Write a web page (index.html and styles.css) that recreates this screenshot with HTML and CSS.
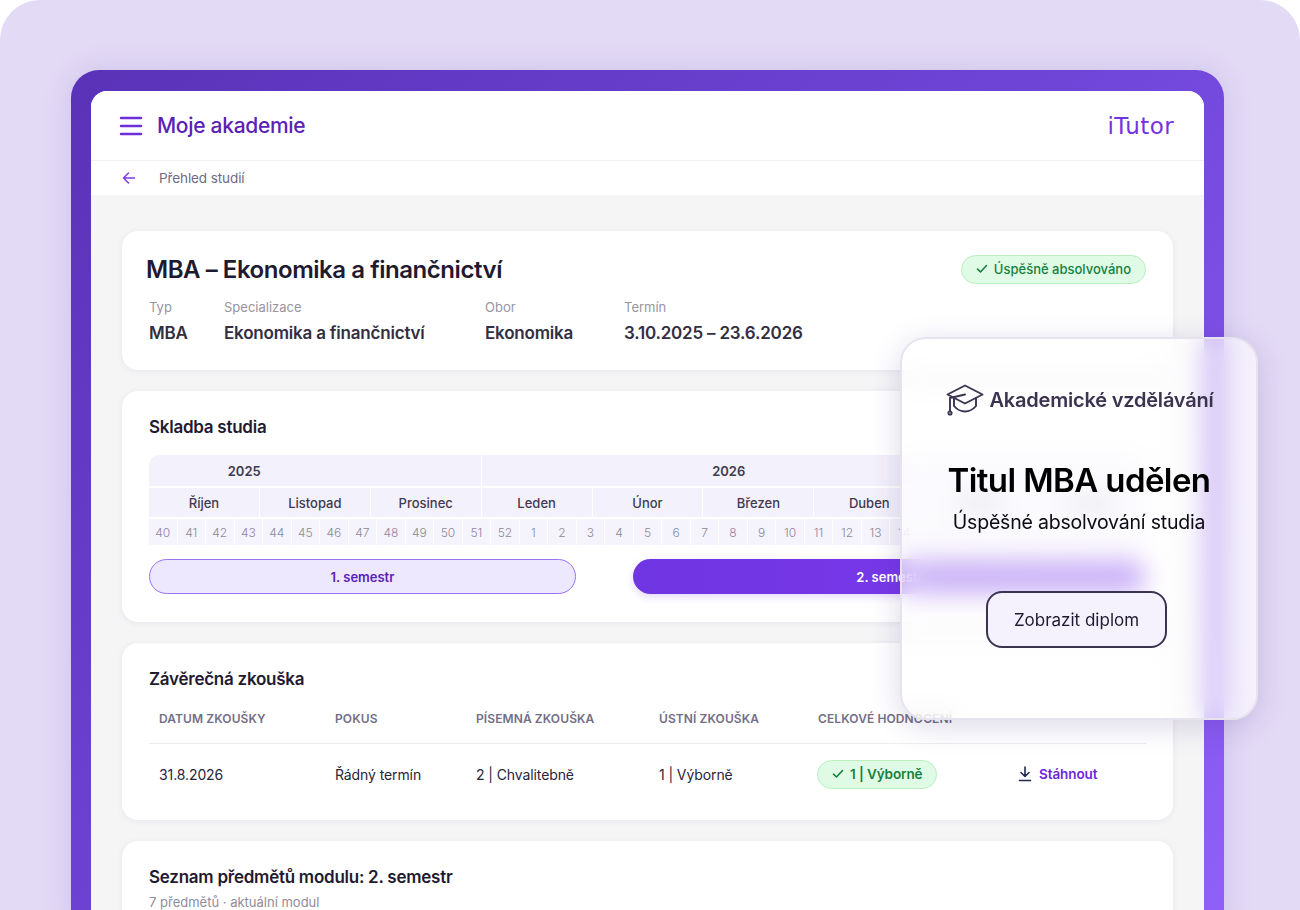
FILE: index.html
```html
<!DOCTYPE html>
<html lang="cs">
<head>
    <meta charset="UTF-8">
    <meta name="viewport" content="width=device-width, initial-scale=1.0">
    <title>Moje akademie</title>
    <link rel="stylesheet" href="styles.css">
</head>
<body>
    <div class="stage">
        <div class="frame">
            <div class="app">
                <header class="topbar">
                    <div class="topbar-left">
                        <svg class="menu-icon" width="24" height="20" viewBox="0 0 24 20" fill="none" stroke="#6d2fdb" stroke-width="2.4" stroke-linecap="round">
                            <path d="M2 2h20M2 10h20M2 18h20"/>
                        </svg>
                        <span class="app-title">Moje akademie</span>
                    </div>
                    <span class="logo">iTutor</span>
                </header>
                <nav class="crumbs">
                    <svg class="back-icon" width="14" height="14" viewBox="0 0 14 14" fill="none" stroke="#7c3aed" stroke-width="1.5" stroke-linecap="round" stroke-linejoin="round">
                        <path d="M12.5 7H1.5M6.5 2 1.5 7l5 5"/>
                    </svg>
                    <span>Přehled studií</span>
                </nav>
                <main class="content">
                    <section class="card card-head">
                        <div class="head-row">
                            <h1>MBA – Ekonomika a finančnictví</h1>
                            <span class="badge">
                                <svg width="12" height="10" viewBox="0 0 12 10" fill="none" stroke="#15803d" stroke-width="1.6" stroke-linecap="round" stroke-linejoin="round"><path d="M1.5 5.2 4.5 8l6-6.5"/></svg>
                                Úspěšně absolvováno
                            </span>
                        </div>
                        <div class="meta">
                            <div><div class="meta-label">Typ</div><div class="meta-value">MBA</div></div>
                            <div><div class="meta-label">Specializace</div><div class="meta-value">Ekonomika a finančnictví</div></div>
                            <div><div class="meta-label">Obor</div><div class="meta-value">Ekonomika</div></div>
                            <div><div class="meta-label">Termín</div><div class="meta-value">3.10.2025 – 23.6.2026</div></div>
                        </div>
                    </section>

                    <section class="card card-plan">
                        <h2>Skladba studia</h2>
                        <div class="timeline">
                            <div class="years">
                                <div class="year year-a">2025</div>
                                <div class="year year-b">2026</div>
                            </div>
                            <div class="months">
                                <div>Říjen</div><div>Listopad</div><div>Prosinec</div><div>Leden</div><div>Únor</div><div>Březen</div><div>Duben</div><div>Květen</div><div>Červen</div>
                            </div>
                            <div class="weeks">
                                <div>40</div><div>41</div><div>42</div><div>43</div><div>44</div><div>45</div><div>46</div><div>47</div><div>48</div><div>49</div><div>50</div><div>51</div><div>52</div><div>1</div><div>2</div><div>3</div><div>4</div><div>5</div><div>6</div><div>7</div><div>8</div><div>9</div><div>10</div><div>11</div><div>12</div><div>13</div><div>14</div><div>15</div><div>16</div><div>17</div><div>18</div><div>19</div><div>20</div><div>21</div><div>22</div>
                            </div>
                        </div>
                        <div class="semesters">
                            <div class="semester semester-done">1. semestr</div>
                            <div class="semester semester-active">2. semestr</div>
                        </div>
                    </section>

                    <section class="card card-exam">
                        <h2>Závěrečná zkouška</h2>
                        <div class="exam-table">
                            <div class="exam-th">Datum zkoušky</div>
                            <div class="exam-th">Pokus</div>
                            <div class="exam-th">Písemná zkouška</div>
                            <div class="exam-th">Ústní zkouška</div>
                            <div class="exam-th">Celkové hodnocení</div>
                            <div class="exam-th"></div>
                            <div class="exam-td">31.8.2026</div>
                            <div class="exam-td">Řádný termín</div>
                            <div class="exam-td">2 | Chvalitebně</div>
                            <div class="exam-td">1 | Výborně</div>
                            <div class="exam-td">
                                <span class="badge badge-strong">
                                    <svg width="12" height="10" viewBox="0 0 12 10" fill="none" stroke="#15803d" stroke-width="1.6" stroke-linecap="round" stroke-linejoin="round"><path d="M1.5 5.2 4.5 8l6-6.5"/></svg>
                                    1 | Výborně
                                </span>
                            </div>
                            <div class="exam-td">
                                <a class="download">
                                    <svg width="14" height="16" viewBox="0 0 14 16" fill="none" stroke="#1e2a4a" stroke-width="1.6" stroke-linecap="round" stroke-linejoin="round"><path d="M7 1v9M3 6.5 7 10.5l4-4M1.5 14.5h11"/></svg>
                                    Stáhnout
                                </a>
                            </div>
                        </div>
                    </section>

                    <section class="card card-list">
                        <h2>Seznam předmětů modulu: 2. semestr</h2>
                        <p class="list-sub">7 předmětů · aktuální modul</p>
                    </section>
                </main>
            </div>
        </div>

        <aside class="glass">
            <div class="glass-brand">
                <svg width="38" height="32" viewBox="0 0 38 32" fill="none" stroke="#3b3350" stroke-width="1.9" stroke-linecap="round" stroke-linejoin="round">
                    <path d="M19 1.5 36.5 10.5 19 19.5 1.5 10.5Z"/>
                    <path d="M8 14v8c3 3.5 7 5.5 11 5.5s8-2 11-5.5v-8"/>
                    <path d="M19 10.5 4 14v13"/>
                    <circle cx="4" cy="29" r="1.6"/>
                </svg>
                <span>Akademické vzdělávání</span>
            </div>
            <div class="glass-title">Titul MBA udělen</div>
            <div class="glass-sub">Úspěšné absolvování studia</div>
            <button class="glass-btn">Zobrazit diplom</button>
        </aside>
    </div>
</body>
</html>
```

FILE: styles.css
```css
* {
    box-sizing: border-box;
}
html, body {
    margin: 0;
    background: #fff;
}
body {
    font-family: "Inter", "Noto Sans", sans-serif;
    color: #1f1a30;
}
h1, h2, p {
    margin: 0;
}

.stage {
    position: relative;
    width: 1300px;
    height: 910px;
    overflow: hidden;
    padding: 70px 76px 0 71px;
    background: #e3daf6;
    border-radius: 40px 40px 0 0;
}
.frame {
    height: 860px;
    padding: 21px 20px 0;
    border-radius: 28px 28px 0 0;
    background: linear-gradient(135deg, #5a32b8 0%, #6f45d8 50%, #9060f8 100%);
    box-shadow: 0 0 30px rgba(70, 40, 150, 0.14);
}
.app {
    height: 100%;
    overflow: hidden;
    border-radius: 16px 16px 0 0;
    background: #f5f5f6;
}

.topbar {
    display: flex;
    align-items: center;
    justify-content: space-between;
    height: 70px;
    padding: 0 30px 0 28px;
    background: #fff;
    border-bottom: 1px solid #f1f0f5;
}
.topbar-left {
    display: flex;
    align-items: center;
    gap: 14px;
}
.app-title {
    font-size: 21px;
    font-weight: 500;
    letter-spacing: -0.3px;
    color: #5b21b6;
}
.logo {
    font-family: "DejaVu Sans", sans-serif;
    font-size: 23px;
    letter-spacing: 0.4px;
    color: #7432e0;
}
.crumbs {
    display: flex;
    align-items: center;
    height: 34px;
    padding: 0 0 0 31px;
    gap: 23px;
    background: #fff;
    font-size: 13.5px;
    letter-spacing: -0.1px;
    color: #6f6b80;
}

.content {
    display: flex;
    flex-direction: column;
    gap: 21px;
    padding: 36px 31px 0;
}
.card {
    background: #fff;
    border-radius: 16px;
    box-shadow: 0 1px 6px rgba(60, 50, 110, 0.08);
}

.card-head {
    height: 139px;
    padding: 22px 27px 0 24px;
}
.head-row {
    display: flex;
    align-items: center;
    justify-content: space-between;
    height: 32px;
}
h1 {
    font-size: 24px;
    font-weight: 600;
    letter-spacing: -0.45px;
}
.badge {
    display: inline-flex;
    align-items: center;
    gap: 6px;
    height: 29px;
    padding: 0 14px;
    border: 1px solid #b9efbf;
    border-radius: 15px;
    background: #dffbe6;
    font-size: 13px;
    font-weight: 500;
    color: #15803d;
}
.meta {
    display: grid;
    grid-template-columns: 75px 261px 139px auto;
    margin-top: 14px;
    padding-left: 3px;
}
.meta-label {
    font-size: 13px;
    color: #97949f;
}
.meta-value {
    margin-top: 8px;
    font-size: 17px;
    font-weight: 600;
    letter-spacing: -0.2px;
    color: #332e42;
}

.card-plan {
    height: 231px;
    padding: 25px 27px 0;
}
h2 {
    font-size: 17px;
    font-weight: 600;
    letter-spacing: -0.25px;
    line-height: 22px;
    color: #1f1a30;
}
.timeline {
    margin-top: 17px;
    overflow: hidden;
    border-radius: 10px 10px 0 0;
    color: #3f3a50;
    font-size: 13px;
}
.years {
    display: grid;
    grid-template-columns: 332.4px 1fr;
    gap: 1px;
    height: 31px;
    margin-bottom: 2px;
}
.year {
    display: flex;
    align-items: center;
    justify-content: center;
    background: #f3f1fb;
    font-size: 13px;
    font-weight: 600;
}
.year-a {
    padding-right: 142px;
}
.year-b {
    padding-right: 171px;
}
.months {
    display: grid;
    grid-template-columns: repeat(9, 1fr);
    gap: 1px;
    height: 29px;
    margin-bottom: 2px;
}
.months div {
    display: flex;
    align-items: center;
    justify-content: center;
    background: #f3f1fb;
    font-weight: 500;
}
.weeks {
    display: grid;
    grid-template-columns: repeat(35, 1fr);
    gap: 1px;
    height: 26px;
}
.weeks div {
    display: flex;
    align-items: center;
    justify-content: center;
    background: #f5f3fc;
    font-size: 12px;
    font-weight: 300;
    color: #8d8998;
}
.semesters {
    display: grid;
    grid-template-columns: 427px 513px;
    justify-content: space-between;
    margin-top: 14px;
}
.semester {
    display: flex;
    align-items: center;
    justify-content: center;
    height: 35px;
    border-radius: 18px;
    font-size: 13px;
    font-weight: 600;
}
.semester-done {
    border: 1px solid #9a73f3;
    background: #ede8fd;
    color: #5b21b6;
}
.semester-active {
    background: linear-gradient(90deg, #7035e2, #7c3aed);
    color: #fff;
    box-shadow: 0 3px 8px rgba(124, 58, 237, 0.2);
}

.card-exam {
    height: 177px;
    padding: 25px 27px 0;
}
.exam-table {
    display: grid;
    grid-template-columns: 176px 141px 183px 159px 210px 1fr;
    margin-top: 14px;
    align-items: center;
}
.exam-th {
    height: 40px;
    padding: 5px 0 0 10px;
    line-height: 20px;
    border-bottom: 1px solid #ececf1;
    font-size: 12px;
    font-weight: 600;
    letter-spacing: 0.1px;
    text-transform: uppercase;
    color: #736e88;
}
.exam-td {
    height: 60px;
    display: flex;
    align-items: center;
    padding: 0 0 0 10px;
    font-size: 14px;
    letter-spacing: -0.1px;
    color: #29243a;
}
.exam-td:nth-child(11) {
    padding-left: 9px;
}
.exam-td:nth-child(12) {
    padding-left: 0;
}
.badge-strong {
    font-weight: 600;
    font-size: 13.5px;
}
.download {
    display: flex;
    align-items: center;
    gap: 7px;
    font-size: 13.5px;
    font-weight: 600;
    color: #6d28d9;
}

.card-list {
    height: 110px;
    padding: 25px 27px 0;
}
.list-sub {
    margin-top: 6px;
    font-size: 13px;
    color: #8f8c9c;
}

.glass {
    position: absolute;
    left: 900px;
    top: 337px;
    width: 358px;
    height: 383px;
    display: flex;
    flex-direction: column;
    align-items: center;
    padding-top: 46px;
    border: 2px solid #e6e3ee;
    border-radius: 26px;
    background: rgba(255, 255, 255, 0.62);
    -webkit-backdrop-filter: blur(12px);
    backdrop-filter: blur(12px);
    box-shadow: 0 6px 30px rgba(60, 40, 120, 0.18);
}
.glass-brand {
    display: flex;
    align-items: center;
    gap: 5px;
    height: 30px;
    margin-left: 2px;
    font-size: 20px;
    font-weight: 600;
    letter-spacing: -0.2px;
    color: #3b3350;
}
.glass-title {
    margin-top: 45px;
    font-size: 33px;
    font-weight: 600;
    letter-spacing: -0.6px;
    line-height: 40px;
    color: #000;
}
.glass-sub {
    margin-top: 9px;
    font-size: 19.5px;
    letter-spacing: -0.2px;
    line-height: 26px;
    color: #0c0a12;
}
.glass-btn {
    width: 181px;
    height: 57px;
    margin-top: 56px;
    margin-right: 5px;
    border: 2px solid #3b3350;
    border-radius: 16px;
    background: #f5f1fd;
    font-family: inherit;
    font-size: 17px;
    color: #1f1a30;
}
```
